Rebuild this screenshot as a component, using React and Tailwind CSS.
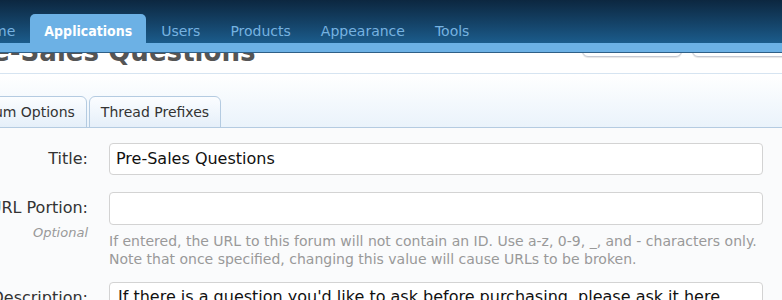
import React from "react";

const navItems = ["Home", "Applications", "Users", "Products", "Appearance", "Tools"];

const font = { fontFamily: '"DejaVu Sans", Verdana, sans-serif' };
const condensed = { fontFamily: '"DejaVu Sans Condensed", "DejaVu Sans", sans-serif' };

const Field = ({ label, hint, children }) => (
  <div className="flex">
    <div className="w-[128px] shrink-0 text-right">
      <div className="text-[16px] leading-[32px] text-[#333] whitespace-nowrap">{label}</div>
      {hint && <div className="mt-[1px] text-[13px] italic leading-[16px] text-[#999]">{hint}</div>}
    </div>
    <div className="ml-[21px] flex-1">{children}</div>
  </div>
);

export default function App() {
  return (
    <div className="w-[782px] h-[300px] overflow-hidden bg-white" style={font}>
      {/* admin nav */}
      <div className="bg-gradient-to-b from-[#0c2740] to-[#1b5c8c]">
        <div className="-ml-[41px] flex h-[43px] items-end">
          {navItems.map((item) =>
            item === "Applications" ? (
              <div
                key={item}
                style={condensed}
                className="flex h-[29px] items-center rounded-t-[5px] bg-[#6cb1e5] px-[14px] pt-[6px] text-[14px] font-bold text-white"
              >
                {item}
              </div>
            ) : (
              <div key={item} className="flex h-[29px] items-center px-[15px] pt-[6px] text-[14px] text-[#76b2e0]">
                {item}
              </div>
            )
          )}
        </div>
      </div>
      <div className="h-[10px] border-b border-[#2f5f86] bg-[#6cb1e5]" />

      {/* title bar, mostly hidden under the nav */}
      <div className="h-[21px] overflow-hidden border-b border-[#d6e4f1]">
        <div className="-ml-[40px] -mt-[20px] flex items-start">
          <h1 style={condensed} className="text-[29px] font-bold leading-[36px] text-[#555] whitespace-nowrap">
            Pre-Sales Questions
          </h1>
          <div className="ml-auto flex gap-[10px] -mr-[20px]">
            <div className="h-[24px] w-[100px] rounded-b-[6px] border border-[#c6c9d2] bg-white shadow-[0_1px_1px_rgba(0,0,0,0.1)]" />
            <div className="h-[24px] w-[110px] rounded-b-[6px] border border-[#c6c9d2] bg-white shadow-[0_1px_1px_rgba(0,0,0,0.1)]" />
          </div>
        </div>
      </div>

      {/* tabs */}
      <div className="h-[54px] bg-gradient-to-b from-white to-[#eaf3fb] border-b border-[#b4cbe1] flex items-end">
        <div className="-ml-[40px] flex gap-[2px]">
          {["Forum Options", "Thread Prefixes"].map((t) => (
            <div
              key={t}
              className="-mb-px flex h-[32px] items-center rounded-t-[6px] border border-[#b4cbe1] bg-gradient-to-b from-[#fbfdff] to-[#e5eff9] px-[11px] text-[14px] text-[#333]"
            >
              {t}
            </div>
          ))}
        </div>
      </div>

      {/* form */}
      <div className="h-full bg-[#fafbfc] pt-[15px]">
        <div className="-ml-[40px] pr-[19px] flex flex-col">
          <Field label="Title:">
            <div className="h-[32px] rounded-[4px] border border-[#d3d3d3] bg-white px-[6px] text-[16px] leading-[30px] text-[#111] whitespace-nowrap">
              Pre-Sales Questions
            </div>
          </Field>
          <div className="h-[17px]" />
          <Field label="URL Portion:" hint="Optional">
            <div className="h-[33px] rounded-[4px] border border-[#d3d3d3] bg-white" />
            <div className="mt-[7px] text-[14px] leading-[18px] text-[#999] whitespace-nowrap">
              If entered, the URL to this forum will not contain an ID. Use a-z, 0-9, _, and - characters only.
              <br />
              Note that once specified, changing this value will cause URLs to be broken.
            </div>
          </Field>
          <div className="h-[14px]" />
          <Field label="Description:">
            <div className="h-[60px] rounded-[4px] border border-[#d3d3d3] bg-white px-[8px] pt-[2px] text-[16px] leading-[24px] text-[#111] whitespace-nowrap">
              If there is a question you'd like to ask before purchasing, please ask it here.
            </div>
          </Field>
        </div>
      </div>
    </div>
  );
}
